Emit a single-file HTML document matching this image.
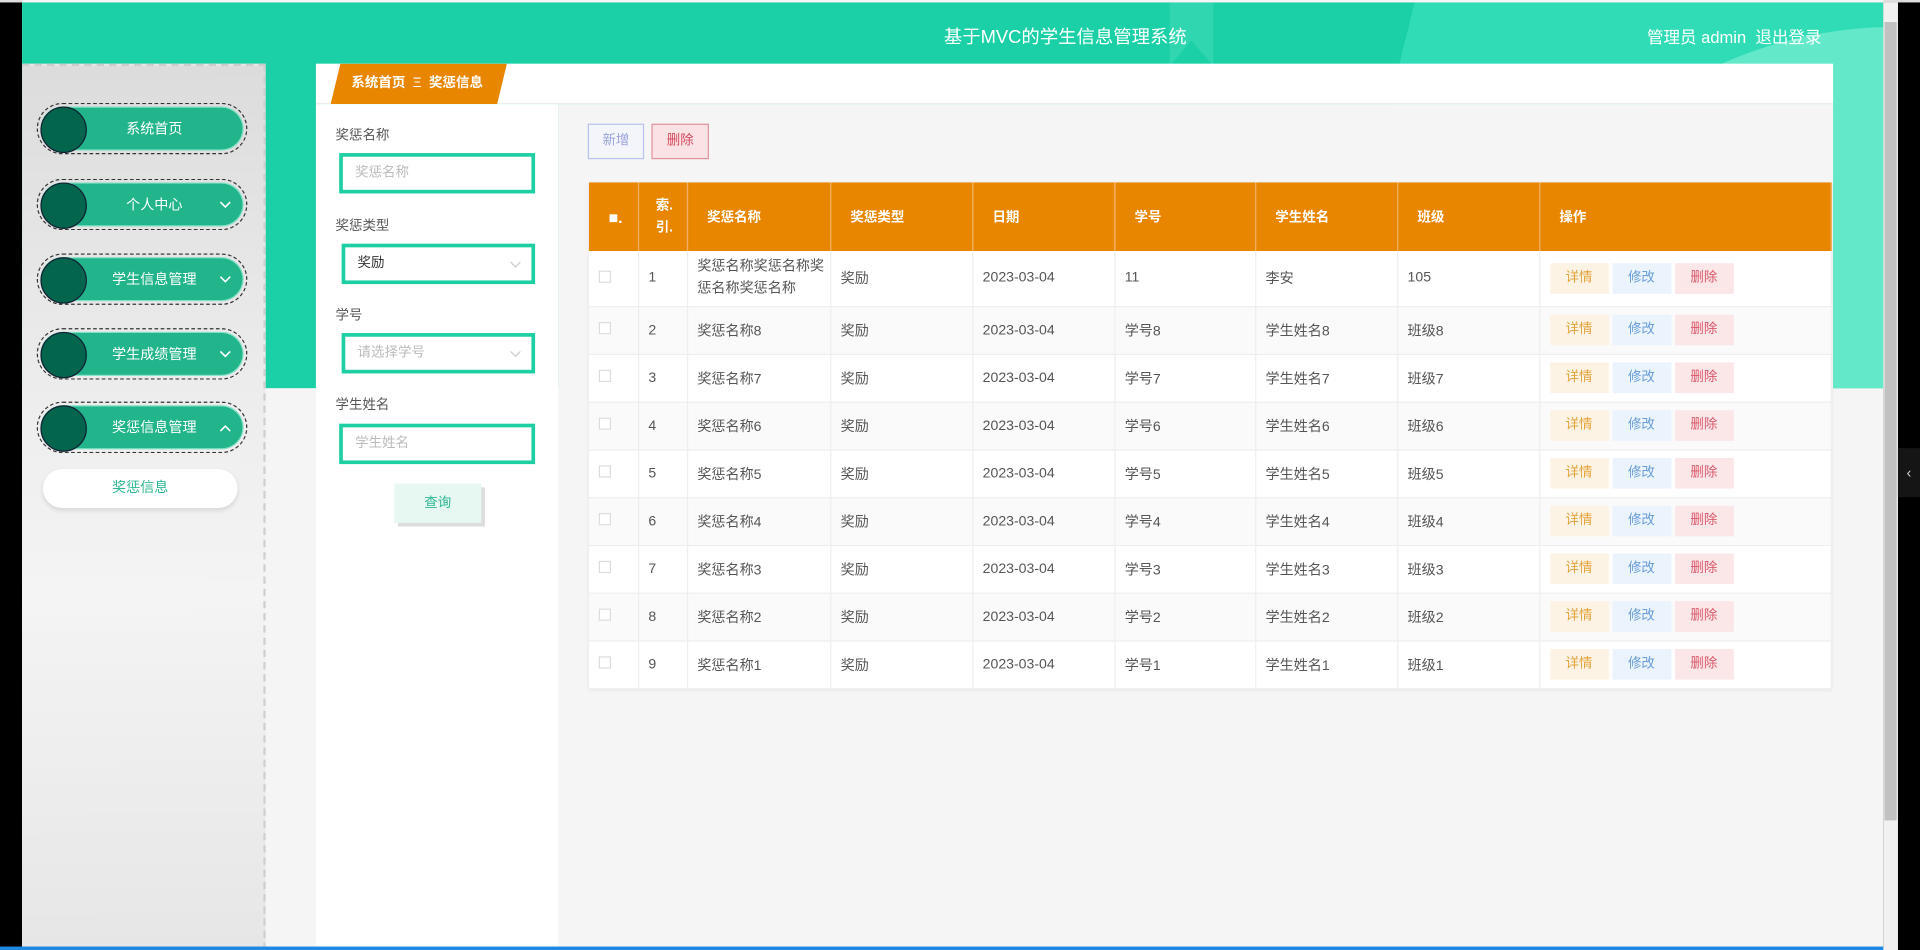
<!DOCTYPE html>
<html><head><meta charset="utf-8">
<style>
*{box-sizing:border-box;margin:0;padding:0}
html,body{width:1920px;height:950px;overflow:hidden;background:#000}
body{font-family:"Liberation Sans","Noto Sans CJK SC",sans-serif}
#w{position:absolute;left:0;top:0;width:1568px;height:776px;transform:scale(1.22449);transform-origin:0 0;overflow:hidden;background:#000}
.abs{position:absolute}
.page{left:18px;top:0;width:1520px;height:776px;background:#f5f5f5;overflow:hidden}
.hdr{left:0;top:2px;width:1520px;height:315px;background:#1bd0a6;overflow:hidden}
.menu{position:absolute;left:12px;width:172px;height:42px;border:1.5px dashed #333;border-radius:21px}
.menu .in{position:absolute;left:3px;top:3px;right:3px;bottom:3px;border-radius:18px;background:#22b48b;box-shadow:0 0 0 1px #7fe0c4}
.menu .dot{position:absolute;left:-1px;top:-1px;width:38px;height:38px;border-radius:50%;background:#04654d;border:1.5px solid #123}
.menu .t{position:absolute;left:20px;right:0;top:0;line-height:36px;text-align:center;color:#fff;font-size:11.5px}
.menu svg{position:absolute;right:9px;top:14px}
.lab{position:absolute;left:16px;font-size:11px;color:#555}
.inp{position:absolute;left:19px;width:160px;height:33px;border:3px solid #1ecfa4;background:#fff;font-size:11px;color:#bbb;padding-left:10px;line-height:27px}
.inp svg{position:absolute;right:8px;top:11px}
table{border-collapse:collapse;position:absolute;left:481px;top:149px;width:1015px;font-size:11.5px;color:#555;background:#fff;box-shadow:0 1px 3px rgba(0,0,0,.08)}
th{background:#e88600;color:#fff;font-weight:bold;text-align:left;padding-left:16px;height:56px;border-right:1px solid #f0b060;font-size:11px}
td{border-right:1px solid #eee;border-bottom:1px solid #eee;padding-left:8px;height:39px}
tr.r1 td{height:45px}
tbody tr:nth-child(even) td{background:#fafafa}
.cb{display:inline-block;width:10px;height:10px;border:1px solid #ddd;background:#fff}
.b{display:inline-block;width:48px;height:25px;line-height:25px;text-align:center;font-size:11px;margin-right:3px}
.bd{background:#fdf3e4;color:#e3a33c}.bx{background:#ebf3fc;color:#6a9ed9}.bs{background:#fbe6e8;color:#d9596b}
</style></head><body>
<div id="w">
<div class="abs" style="left:0;top:0;width:1568px;height:2px;background:#ddd"></div>
<div class="abs page">
 <div class="abs hdr">
  <div class="abs" style="left:1090px;top:-10px;width:700px;height:400px;background:#30dcb6;transform:skewX(-14deg)"></div>
  <div class="abs" style="left:1180px;top:20px;width:700px;height:700px;border-radius:50%;background:#63e9c9"></div>
  <div class="abs" style="left:937px;top:0;width:36px;height:52px;background:#2fd6b0;clip-path:polygon(0 0,100% 0,100% 100%,50% 60%,0 100%)"></div>
  <div class="abs" style="left:0;width:1704px;top:17px;text-align:center;color:#fff;font-size:15px">基于MVC的学生信息管理系统</div>
  <div class="abs" style="left:1327px;top:17px;color:#fff;font-size:13.5px">管理员 admin&nbsp;&nbsp;退出登录</div>
 </div>
 <!-- main gray area -->
 <div class="abs" style="left:438px;top:85px;width:1041px;height:691px;background:#f5f5f5"></div>
 <!-- sidebar -->
 <div class="abs" style="left:0;top:52px;width:199px;height:724px;background:linear-gradient(180deg,#dcdcdc 0%,#eee 40%,#f4f4f4 60%,#e6e6e6 100%);border-right:2px dashed #cfcfcf;border-top:2px dashed #ccc">
  <div class="menu" style="top:30px"><div class="in"><div class="dot"></div><div class="t">系统首页</div></div></div>
  <div class="menu" style="top:92px"><div class="in"><div class="dot"></div><div class="t">个人中心</div><svg width="10" height="7" viewBox="0 0 10 7"><path d="M1 1l4 4 4-4" stroke="#fff" stroke-width="1.3" fill="none"/></svg></div></div>
  <div class="menu" style="top:153px"><div class="in"><div class="dot"></div><div class="t">学生信息管理</div><svg width="10" height="7" viewBox="0 0 10 7"><path d="M1 1l4 4 4-4" stroke="#fff" stroke-width="1.3" fill="none"/></svg></div></div>
  <div class="menu" style="top:214px"><div class="in"><div class="dot"></div><div class="t">学生成绩管理</div><svg width="10" height="7" viewBox="0 0 10 7"><path d="M1 1l4 4 4-4" stroke="#fff" stroke-width="1.3" fill="none"/></svg></div></div>
  <div class="menu" style="top:274px"><div class="in"><div class="dot"></div><div class="t">奖惩信息管理</div><svg width="10" height="7" viewBox="0 0 10 7"><path d="M1 6l4-4 4 4" stroke="#fff" stroke-width="1.3" fill="none"/></svg></div></div>
  <div class="abs" style="left:17px;top:329px;width:159px;height:32px;border-radius:16px;background:#fff;box-shadow:0 2px 4px rgba(0,0,0,.12);text-align:center;line-height:32px;color:#2db793;font-size:11.5px">奖惩信息</div>
 </div>
 <!-- breadcrumb -->
 <div class="abs" style="left:240px;top:52px;width:1239px;height:33px;background:#fff;border-bottom:1px solid #eee"></div>
 <div class="abs" style="left:252px;top:52px;width:144px;height:33px;background:#e88600;clip-path:polygon(8px 0,100% 0,calc(100% - 8px) 100%,0 100%);color:#fff;font-size:11px;font-weight:bold;line-height:33px;padding-left:17px">系统首页&nbsp;&nbsp;<span style="font-weight:normal">Ξ</span>&nbsp;&nbsp;奖惩信息</div>
 <!-- search panel -->
 <div class="abs" style="left:240px;top:85px;width:198px;height:691px;background:#fff">
  <div class="lab" style="top:17px">奖惩名称</div>
  <div class="inp" style="top:40px">奖惩名称</div>
  <div class="lab" style="top:91px">奖惩类型</div>
  <div class="inp" style="top:114px;color:#333;width:158px;left:21px">奖励<svg width="10" height="6" viewBox="0 0 10 6"><path d="M1 1l4 4 4-4" stroke="#ccc" stroke-width="1" fill="none"/></svg></div>
  <div class="lab" style="top:164px">学号</div>
  <div class="inp" style="top:187px;width:158px;left:21px">请选择学号<svg width="10" height="6" viewBox="0 0 10 6"><path d="M1 1l4 4 4-4" stroke="#ccc" stroke-width="1" fill="none"/></svg></div>
  <div class="lab" style="top:237px">学生姓名</div>
  <div class="inp" style="top:261px">学生姓名</div>
  <div class="abs" style="left:64px;top:310px;width:71px;height:32px;background:#e7f8f3;box-shadow:3px 3px 0 #ddd;color:#2db793;font-size:11px;text-align:center;line-height:32px">查询</div>
 </div>
 <!-- buttons -->
 <div class="abs" style="left:462px;top:101px;width:46px;height:29px;border:1px solid #b8c2ef;background:#f4f5fb;color:#9aa4dd;font-size:11px;text-align:center;line-height:27px">新增</div>
 <div class="abs" style="left:514px;top:101px;width:47px;height:29px;border:1px solid #e0949e;background:#fbe2e5;color:#d44a5c;font-size:11px;text-align:center;line-height:27px">删除</div>
</div>
<table>
<thead><tr>
<th style="width:40px;padding-left:16px;font-size:13px">■.</th><th style="width:40px;padding-left:14px;line-height:18px">索.<br>引.</th><th style="width:117px">奖惩名称</th><th style="width:116px">奖惩类型</th><th style="width:116px">日期</th><th style="width:115px">学号</th><th style="width:116px">学生姓名</th><th style="width:116px">班级</th><th>操作</th>
</tr></thead>
<tbody>
<tr class="r1"><td><span class="cb"></span></td><td>1</td><td style="line-height:18px">奖惩名称奖惩名称奖惩名称奖惩名称</td><td>奖励</td><td>2023-03-04</td><td>11</td><td>李安</td><td>105</td><td><span class="b bd">详情</span><span class="b bx">修改</span><span class="b bs">删除</span></td></tr>
<tr><td><span class="cb"></span></td><td>2</td><td>奖惩名称8</td><td>奖励</td><td>2023-03-04</td><td>学号8</td><td>学生姓名8</td><td>班级8</td><td><span class="b bd">详情</span><span class="b bx">修改</span><span class="b bs">删除</span></td></tr>
<tr><td><span class="cb"></span></td><td>3</td><td>奖惩名称7</td><td>奖励</td><td>2023-03-04</td><td>学号7</td><td>学生姓名7</td><td>班级7</td><td><span class="b bd">详情</span><span class="b bx">修改</span><span class="b bs">删除</span></td></tr>
<tr><td><span class="cb"></span></td><td>4</td><td>奖惩名称6</td><td>奖励</td><td>2023-03-04</td><td>学号6</td><td>学生姓名6</td><td>班级6</td><td><span class="b bd">详情</span><span class="b bx">修改</span><span class="b bs">删除</span></td></tr>
<tr><td><span class="cb"></span></td><td>5</td><td>奖惩名称5</td><td>奖励</td><td>2023-03-04</td><td>学号5</td><td>学生姓名5</td><td>班级5</td><td><span class="b bd">详情</span><span class="b bx">修改</span><span class="b bs">删除</span></td></tr>
<tr><td><span class="cb"></span></td><td>6</td><td>奖惩名称4</td><td>奖励</td><td>2023-03-04</td><td>学号4</td><td>学生姓名4</td><td>班级4</td><td><span class="b bd">详情</span><span class="b bx">修改</span><span class="b bs">删除</span></td></tr>
<tr><td><span class="cb"></span></td><td>7</td><td>奖惩名称3</td><td>奖励</td><td>2023-03-04</td><td>学号3</td><td>学生姓名3</td><td>班级3</td><td><span class="b bd">详情</span><span class="b bx">修改</span><span class="b bs">删除</span></td></tr>
<tr><td><span class="cb"></span></td><td>8</td><td>奖惩名称2</td><td>奖励</td><td>2023-03-04</td><td>学号2</td><td>学生姓名2</td><td>班级2</td><td><span class="b bd">详情</span><span class="b bx">修改</span><span class="b bs">删除</span></td></tr>
<tr><td><span class="cb"></span></td><td>9</td><td>奖惩名称1</td><td>奖励</td><td>2023-03-04</td><td>学号1</td><td>学生姓名1</td><td>班级1</td><td><span class="b bd">详情</span><span class="b bx">修改</span><span class="b bs">删除</span></td></tr>
</tbody></table>
<!-- scrollbar -->
<div class="abs" style="left:1538px;top:2px;width:12px;height:774px;background:#f1f1f1"></div>
<div class="abs" style="left:1539px;top:18px;width:10px;height:652px;background:#c1c1c1"></div>
<div class="abs" style="left:1550px;top:366px;width:18px;height:40px;background:#151515;color:#ccc;font-size:12px;text-align:center;line-height:40px">‹</div>
<div class="abs" style="left:0;top:773px;width:1538px;height:3px;background:#1e88e5"></div>
</div>
</body></html>
